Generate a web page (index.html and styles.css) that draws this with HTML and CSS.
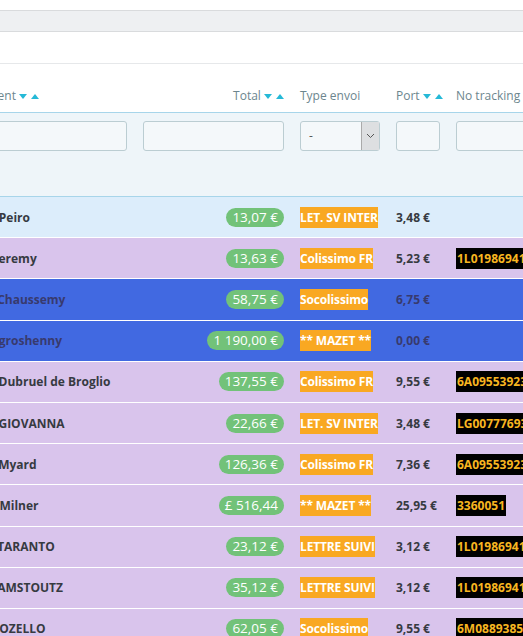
FILE: index.html
```html
<!DOCTYPE html>
<html lang="fr">
<head>
  <meta charset="UTF-8" />
  <title>Commandes</title>
  <link rel="stylesheet" href="styles.css">
</head>
<body>

<div class="page-bar"></div>
<div class="panel-heading"></div>

<div class="grid-wrap">
  <table class="orders">
    <colgroup>
      <col class="c-client">
      <col class="c-total">
      <col class="c-type">
      <col class="c-port">
      <col class="c-track">
    </colgroup>
    <thead>
      <tr class="head">
        <th>Client <span class="sort"><i class="down"></i><i class="up"></i></span></th>
        <th class="right">Total <span class="sort"><i class="down"></i><i class="up"></i></span></th>
        <th>Type envoi</th>
        <th>Port <span class="sort"><i class="down"></i><i class="up"></i></span></th>
        <th>No tracking</th>
      </tr>
      <tr class="filter">
        <td><input type="text" /></td>
        <td><input type="text" /></td>
        <td>
          <div class="fake-select">
            <span>-</span>
            <span class="arrow">
              <svg width="9" height="6" viewBox="0 0 9 6"><path d="M1 1 L4.5 4.5 L8 1" fill="none" stroke="#555" stroke-width="1"/></svg>
            </span>
          </div>
        </td>
        <td><input type="text" /></td>
        <td><input type="text" /></td>
      </tr>
    </thead>
    <tbody id="rows"></tbody>
  </table>
</div>

<script>
  const orders = [
    { name: "A. Peiro", total: "13,07 €", type: "LET. SV INTER", port: "3,48 €", track: "", cls: "sel" },
    { name: "J. Jeremy", total: "13,63 €", type: "Colissimo FR", port: "5,23 €", track: "1L01986941254", cls: "lav" },
    { name: "F. Chaussemy", total: "58,75 €", type: "Socolissimo", port: "6,75 €", track: "", cls: "blue" },
    { name: "A. groshenny", total: "1 190,00 €", type: "** MAZET **", port: "0,00 €", track: "", cls: "blue" },
    { name: "B. Dubruel de Broglio", total: "137,55 €", type: "Colissimo FR", port: "9,55 €", track: "6A09553923412", cls: "lav" },
    { name: "R. GIOVANNA", total: "22,66 €", type: "LET. SV INTER", port: "3,48 €", track: "LG007776935FR", cls: "lav" },
    { name: "C. Myard", total: "126,36 €", type: "Colissimo FR", port: "7,36 €", track: "6A09553923508", cls: "lav" },
    { name: "D. Milner", total: "£ 516,44", type: "** MAZET **", port: "25,95 €", track: "3360051", cls: "lav" },
    { name: "F. TARANTO", total: "23,12 €", type: "LETTRE SUIVI", port: "3,12 €", track: "1L01986941308", cls: "lav" },
    { name: "E. AMSTOUTZ", total: "35,12 €", type: "LETTRE SUIVI", port: "3,12 €", track: "1L01986941315", cls: "lav" },
    { name: "G. OZELLO", total: "62,05 €", type: "Socolissimo", port: "9,55 €", track: "6M08893851234", cls: "lav" }
  ];

  const body = document.getElementById("rows");
  body.innerHTML = orders.map(o => `
    <tr class="${o.cls}">
      <td class="name">${o.name}</td>
      <td class="right"><span class="badge">${o.total}</span></td>
      <td><span class="ship">${o.type}</span></td>
      <td class="port">${o.port}</td>
      <td>${o.track ? `<span class="track">${o.track}</span>` : ""}</td>
    </tr>
  `).join("");
</script>

</body>
</html>
```

FILE: styles.css
```css
* { box-sizing: border-box; }
body { margin: 0; background: #fff; font-family: "Open Sans", Arial, sans-serif; color: #363a41; }

.page-bar {
  margin-top: 10px;
  height: 22px;
  background: #eef0f2;
  border-top: 1px solid #d9dbdd;
  border-bottom: 1px solid #d9dbdd;
}

.panel-heading {
  height: 32px;
  border-bottom: 1px solid #e6e8ea;
}

.grid-wrap { overflow: hidden; }

.orders {
  border-collapse: collapse;
  table-layout: fixed;
  width: 760px;
  margin-left: -24px;
}

.c-client { width: 159px; }
.c-total { width: 157px; }
.c-type { width: 96px; }
.c-port { width: 60px; }
.c-track { width: 288px; }

.orders th {
  font-size: 12px;
  font-weight: normal;
  color: #6c868e;
  text-align: left;
  white-space: nowrap;
  line-height: 18px;
  padding: 23px 8px 7px;
  border-bottom: 1px solid #a7d5ea;
}

.orders .right { text-align: right; }

.sort { display: inline-flex; gap: 4px; vertical-align: middle; }
.sort i { width: 0; height: 0; border-left: 4px solid transparent; border-right: 4px solid transparent; }
.sort .down { border-top: 5px solid #25b9d7; }
.sort .up { border-bottom: 5px solid #25b9d7; }

.filter td {
  background: #eef5f9;
  padding: 8px 8px 45px;
  border-bottom: 1px solid #a7d5ea;
}

.filter input {
  width: 100%;
  height: 30px;
  border: 1px solid #bbcdd2;
  border-radius: 3px;
  background: #f4f8fa;
}

.fake-select {
  display: flex;
  justify-content: space-between;
  height: 30px;
  border: 1px solid #bbcdd2;
  border-radius: 3px;
  background: #f4f8fa;
  font-size: 12px;
  color: #555;
  line-height: 28px;
  padding-left: 8px;
}

.fake-select .arrow {
  width: 18px;
  background: #dddfe1;
  border-left: 1px solid #aaa;
  display: flex;
  align-items: center;
  justify-content: center;
}

tbody td {
  height: 41.2px;
  padding: 0 8px;
  font-size: 12px;
  white-space: nowrap;
  overflow: hidden;
  border-bottom: 1px solid rgba(255, 255, 255, 0.55);
}

tbody tr.sel td { background: #dcedfb; }
tbody tr.lav td { background: #d9c4ec; }
tbody tr.blue td { background: #4169e1; }

.name, .port { font-weight: bold; }
tbody tr.blue .name, tbody tr.blue .port { color: #383a6e; }

.badge {
  display: inline-block;
  background: #72c279;
  color: #fff;
  font-size: 13.5px;
  line-height: 19px;
  padding: 0 6px;
  border-radius: 10px;
}

.ship {
  background: #f9a822;
  color: #fff;
  font-weight: bold;
  padding: 2px 0;
  letter-spacing: -0.15px;
}

.track {
  background: #000;
  color: #f8b620;
  font-weight: bold;
  padding: 2px 1px;
}
```
